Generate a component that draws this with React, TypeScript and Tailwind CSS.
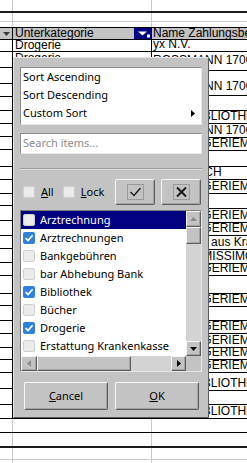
import React from 'react'

const colA = [
  'h-[12px]', 'h-[16px]', 'h-[16px]', 'h-[13px]', 'h-[14px]', 'h-[13px]', 'h-[13px]', 'h-[13px]', 'h-[17px]',
  'h-[13px]', 'h-[14px]', 'h-[12px]', 'h-[15px]', 'h-[15px]', 'h-[13px]', 'h-[14px]', 'h-[13px]', 'h-[18px]',
  'h-[12px]', 'h-[15px]', 'h-[13px]', 'h-[14px]', 'h-[12px]', 'h-[13px]', 'h-[16px]', 'h-[16px]', 'h-[14px]',
]

const DM = 'DM-DROGERIEMARKT'
const BIB = 'STADTBIBLIOTHEK'
const ROSS = 'ROSSMANN 1700'

// [height, text, alignment]
const colC: [string, string, string][] = [
  ['h-[12px]', 'yx N.V.', 'items-end'], ['h-[19px]', ROSS, 'items-start pt-[2px]'], ['h-[25px]', ROSS, 'items-end pb-[2px]'],
  ['h-[15px]', '', ''], ['h-[13px]', BIB, 'items-end'], ['h-[14px]', ROSS, 'items-end'], ['h-[13px]', DM, 'items-end'],
  ['h-[16px]', '', ''], ['h-[13px]', 'DR. ULRICH', 'items-end'], ['h-[14px]', DM, 'items-end'], ['h-[15px]', '', ''],
  ['h-[14px]', DM, 'items-end'], ['h-[13px]', DM, 'items-end'], ['h-[14px]', 'Erstattung aus Krankenkasse', 'items-end'],
  ['h-[14px]', 'DENTAL MISSIMO', 'items-end'], ['h-[12px]', DM, 'items-end'], ['h-[18px]', '', ''], ['h-[13px]', DM, 'items-end'],
  ['h-[14px]', '', ''], ['h-[13px]', DM, 'items-end'], ['h-[14px]', DM, 'items-end'], ['h-[12px]', DM, 'items-end'],
  ['h-[13px]', DM, 'items-end'], ['h-[18px]', BIB, 'items-end'], ['h-[14px]', '', ''], ['h-[14px]', BIB, 'items-end'],
]

const items: [string, boolean][] = [
  ['Arztrechnung', false],
  ['Arztrechnungen', true],
  ['Bankgebühren', false],
  ['bar Abhebung Bank', false],
  ['Bibliothek', true],
  ['Bücher', false],
  ['Drogerie', true],
  ['Erstattung Krankenkasse', false],
]

const bevel =
  'border border-t-[#f4f4f4] border-l-[#f4f4f4] border-r-[#5e5e5e] border-b-[#5e5e5e] shadow-[inset_-1px_-1px_0_#a2a2a2] bg-[#c3c3c3]'

function GridRow({ className }: { className: string }) {
  return (
    <div className={`flex ${className}`}>
      <div className="w-[13px] shrink-0 border-r border-[#c9c9c9]" />
      <div className="w-[139px] shrink-0 border-r border-[#c9c9c9]" />
      <div className="flex-1" />
    </div>
  )
}

function Sheet() {
  return (
    <div className="flex h-full flex-col font-['Liberation_Sans',Arial,sans-serif] text-[12px] text-black">
      <GridRow className="h-[13px] border-b-2 border-[#1c1c1c]" />
      <GridRow className="h-[9px] border-b border-[#c9c9c9]" />
      <GridRow className="h-[6px] border-b border-black" />
      <div className="flex h-[12px] border-b border-black bg-[#c3c3c3] leading-[11px]">
        <div className="flex w-[13px] shrink-0 items-center border-r border-black pl-[3px]">
          <svg width="7" height="4" viewBox="0 0 7 4">
            <polygon points="0,0 7,0 3.5,4" fill="#3a3a3a" />
          </svg>
        </div>
        <div className="flex w-[139px] shrink-0 items-center border-r border-black pl-[2px]">
          <span>Unterkategorie</span>
          <span className="ml-auto h-[11px] w-[17px] bg-[#000080]">
            <svg width="17" height="11" viewBox="0 0 17 11">
              <polygon points="4,3.5 13,3.5 8.5,7.5" fill="#fff" />
              <rect x="13" y="6.5" width="3" height="3" fill="#fff" />
            </svg>
          </span>
        </div>
        <div className="min-w-0 flex-1 overflow-hidden whitespace-nowrap pl-[1px]">Name Zahlungsbeteiligter</div>
      </div>
      <div className="flex h-[379px]">
        <div className="flex w-[13px] shrink-0 flex-col border-r border-black">
          {colA.map((h, i) => (
            <div key={i} className={`${h} border-b border-black`} />
          ))}
        </div>
        <div className="flex w-[139px] shrink-0 flex-col border-r border-black">
          <div className="flex h-[12px] items-end border-b border-black pl-[2px] leading-[12px]">Drogerie</div>
          <div className="flex h-[16px] items-start border-b border-black pl-[2px] leading-[12px]">Drogerie</div>
          <div className="flex-1 border-b border-black" />
        </div>
        <div className="flex min-w-0 flex-1 flex-col">
          {colC.map(([h, t, align], i) => (
            <div
              key={i}
              className={`${h} ${align} flex overflow-hidden whitespace-nowrap border-b border-black pl-[1px] leading-[13px]`}>
              {t}
            </div>
          ))}
        </div>
      </div>
      <GridRow className="h-[14px] border-b border-black" />
      <GridRow className="h-[15px] border-b-2 border-[#1c1c1c]" />
      <GridRow className="h-[12px] border-b border-[#c9c9c9]" />
      <GridRow className="flex-1" />
    </div>
  )
}

function Box({ checked }: { checked?: boolean }) {
  if (checked)
    return (
      <span className="flex h-[12px] w-[12px] shrink-0 items-center justify-center rounded-[2px] bg-[#2f7fdc]">
        <svg width="10" height="10" viewBox="0 0 10 10">
          <path d="M1.6 5.2 L4 7.6 L8.6 2.2" fill="none" stroke="#fff" strokeWidth="1.7" />
        </svg>
      </span>
    )
  return <span className="h-[12px] w-[12px] shrink-0 rounded-[2px] border border-[#cfcfcf] bg-[#ebebeb]" />
}

function Tri({ dir, on }: { dir: 'up' | 'down' | 'left' | 'right'; on?: boolean }) {
  const pts = {
    up: '0,4 7,4 3.5,0',
    down: '0,0 7,0 3.5,4',
    left: '4,0 4,7 0,3.5',
    right: '0,0 0,7 4,3.5',
  }[dir]
  const v = dir === 'up' || dir === 'down'
  return (
    <svg width={v ? 7 : 4} height={v ? 4 : 7} viewBox={v ? '0 0 7 4' : '0 0 4 7'}>
      <polygon points={pts} fill={on ? '#000' : '#8a8a8a'} />
    </svg>
  )
}

function FilterPopup() {
  return (
    <div className="absolute left-[13px] top-[57px] flex h-[361px] w-[196px] flex-col border border-t-[#e6e6e6] border-l-[#e6e6e6] border-r-[#5c5c5c] border-b-[#5c5c5c] bg-[#c3c3c3] px-[6px] pt-[9px] font-['Noto_Sans',sans-serif] text-[11px] text-black">
      <div className="h-[58px] border border-t-[#8a8a8a] border-l-[#8a8a8a] border-r-[#e8e8e8] border-b-[#e8e8e8] bg-white">
        <div className="h-[18px] pl-[2px] leading-[18px]">Sort Ascending</div>
        <div className="h-[18px] pl-[2px] leading-[18px]">Sort Descending</div>
        <div className="flex h-[18px] items-center pl-[2px] pr-[6px] leading-[18px]">
          <span>Custom Sort</span>
          <span className="ml-auto flex">
            <Tri dir="right" on />
          </span>
        </div>
      </div>
      <div className="mt-[8px] flex h-[21px] items-center border border-t-[#8a8a8a] border-l-[#8a8a8a] border-r-[#e8e8e8] border-b-[#e8e8e8] bg-white pl-[2px] text-[#8c8c8c]">
        Search items...
      </div>
      <div className="mt-[14px] h-[2px] border-t border-b border-t-[#9c9c9c] border-b-[#e2e2e2]" />
      <div className="mt-[9px] flex h-[26px] items-center">
        <div className="ml-[3px] flex items-center gap-[6px]">
          <Box />
          <span>
            <span className="underline">A</span>ll
          </span>
        </div>
        <div className="ml-[9px] flex items-center gap-[6px]">
          <Box />
          <span>
            <span className="underline">L</span>ock
          </span>
        </div>
        <div className="ml-auto mr-[1px] flex gap-[6px]">
          <button className={`flex h-[26px] w-[40px] items-center justify-center rounded-[2px] ${bevel}`}>
            <svg width="17" height="16" viewBox="0 0 17 16">
              <rect x="0.5" y="0.5" width="16" height="15" fill="none" stroke="#9a9a9a" />
              <path d="M3.5 8 L7 11.5 L13.5 4" fill="none" stroke="#1a1a1a" strokeWidth="1.4" />
            </svg>
          </button>
          <button className={`flex h-[26px] w-[40px] items-center justify-center rounded-[2px] ${bevel}`}>
            <svg width="17" height="16" viewBox="0 0 17 16">
              <rect x="0.5" y="0.5" width="16" height="15" fill="none" stroke="#9a9a9a" />
              <path d="M4 3.5 L13 12.5 M13 3.5 L4 12.5" fill="none" stroke="#1a1a1a" strokeWidth="2" />
            </svg>
          </button>
        </div>
      </div>
      <div className="mt-[5px] flex h-[162px] flex-col border border-t-[#7c7c7c] border-l-[#7c7c7c] border-r-[#e6e6e6] border-b-[#e6e6e6]">
        <div className="flex h-[145px]">
          <div className="min-w-0 flex-1 overflow-hidden bg-white">
            {items.map(([label, checked], i) => (
              <div
                key={label}
                className={`flex h-[18px] items-center gap-[5px] whitespace-nowrap pl-[2px] ${
                  i === 0 ? 'bg-[#000080] text-white' : ''
                }`}>
                <Box checked={checked} />
                <span>{label}</span>
              </div>
            ))}
          </div>
          <div className="flex w-[15px] flex-col bg-[#d3d3d3]">
            <div className={`flex h-[16px] items-center justify-center ${bevel}`}>
              <Tri dir="up" />
            </div>
            <div className={`h-[17px] ${bevel}`} />
            <div className="flex-1" />
            <div className={`flex h-[15px] items-center justify-center ${bevel}`}>
              <Tri dir="down" on />
            </div>
          </div>
        </div>
        <div className="flex h-[15px] bg-[#d3d3d3]">
          <div className={`flex w-[16px] items-center justify-center ${bevel}`}>
            <Tri dir="left" />
          </div>
          <div className={`w-[94px] ${bevel}`} />
          <div className="flex-1" />
          <div className={`flex w-[15px] items-center justify-center ${bevel}`}>
            <Tri dir="right" on />
          </div>
          <div className="w-[15px] bg-[#c3c3c3]" />
        </div>
      </div>
      <div className="mt-[10px] flex">
        <button className={`ml-[4px] flex h-[28px] w-[84px] items-center justify-center rounded-[2px] ${bevel}`}>
          <span>
            <span className="underline">C</span>ancel
          </span>
        </button>
        <button className={`ml-[7px] flex h-[28px] w-[84px] items-center justify-center rounded-[2px] ${bevel}`}>
          <span>
            <span className="underline">O</span>K
          </span>
        </button>
      </div>
    </div>
  )
}

export default function App() {
  return (
    <div className="relative h-[463px] w-[247px] overflow-hidden bg-white">
      <Sheet />
      <FilterPopup />
    </div>
  )
}
